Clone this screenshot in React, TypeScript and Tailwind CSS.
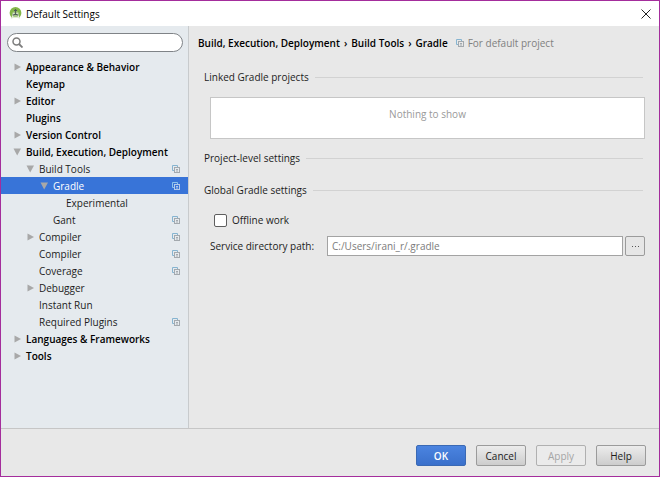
import React from "react";

type Node = {
  label: string;
  level: number;
  state?: "open" | "closed";
  project?: boolean;
  selected?: boolean;
};

const nodes: Node[] = [
  { label: "Appearance & Behavior", level: 0, state: "closed" },
  { label: "Keymap", level: 0 },
  { label: "Editor", level: 0, state: "closed" },
  { label: "Plugins", level: 0 },
  { label: "Version Control", level: 0, state: "closed" },
  { label: "Build, Execution, Deployment", level: 0, state: "open" },
  { label: "Build Tools", level: 1, state: "open", project: true },
  { label: "Gradle", level: 2, state: "open", project: true, selected: true },
  { label: "Experimental", level: 3 },
  { label: "Gant", level: 2, project: true },
  { label: "Compiler", level: 1, state: "closed", project: true },
  { label: "Compiler", level: 1, project: true },
  { label: "Coverage", level: 1, project: true },
  { label: "Debugger", level: 1, state: "closed" },
  { label: "Instant Run", level: 1 },
  { label: "Required Plugins", level: 1, project: true },
  { label: "Languages & Frameworks", level: 0, state: "closed" },
  { label: "Tools", level: 0, state: "closed" },
];

const indents = ["pl-3", "pl-[25px]", "pl-[39px]", "pl-[52px]"];

function ProjectIcon({ selected = false }: { selected?: boolean }) {
  const back = selected ? "#8fc3ea" : "#86b4d0";
  const front = selected ? "#b4c9ea" : "#a3a9ae";
  return (
    <svg viewBox="0 0 8 8" className="size-2 shrink-0" aria-hidden="true">
      <path d="M2 5.5H.5v-5h5V2" fill="none" stroke={back} />
      <rect x="2.5" y="2.5" width="5" height="5" fill="none" stroke={front} />
      <path d="M4 4.5h2M4 6h2" stroke={front} />
    </svg>
  );
}

function Arrow({ state }: { state?: "open" | "closed" }) {
  return (
    <svg viewBox="0 0 8 8" className="size-2 shrink-0" fill="#a8a8a8" aria-hidden="true">
      {state === "closed" && <path d="M1.5 .5 8 4 1.5 7.5z" />}
      {state === "open" && <path d="M.5 .5h7.500L4.200 7.500z" />}
    </svg>
  );
}

function AndroidStudioLogo() {
  return (
    <svg viewBox="0 0 13 13" className="size-[13px]" aria-hidden="true">
      <circle cx="6.5" cy="6" r="5.9" fill="#83b648" />
      <path d="M3 7.200a3.500 3 0 0 1 7 0L9 10H4z" fill="#a9c88a" />
      <path d="M5.200 6 2.500 12M7.800 6l2.700 6" stroke="#e9efe4" strokeWidth="1.200" />
      <path d="M3.800 10.200h5.400L10 13H3z" fill="#fff" />
      <path d="M6.500 2v6M5 3.500h3M3.800 8.200l2.700-1.200 2.700 1.200" stroke="#4f5f55" strokeWidth="1.200" fill="none" />
    </svg>
  );
}

function Section({ title, children }: { title: string; children?: React.ReactNode }) {
  return (
    <section>
      <div className="mr-0.5 flex items-center gap-1.5">
        <h2 className="leading-4">{title}</h2>
        <span className="h-px flex-1 bg-[#d2d2d2]" />
      </div>
      {children}
    </section>
  );
}

const button =
  "h-[21px] w-[50px] rounded-xs border border-[#9b9b9b] bg-linear-to-b from-[#ececec] to-[#cdcdcd] text-center font-medium";

export default function App() {
  return (
    <div className="flex h-screen flex-col border border-[#a42d9c] bg-[#e8e8e8] font-['Open_Sans','Noto_Sans',sans-serif] text-[10px] leading-4 text-[#1c1c1c]">
      <header className="flex h-[25px] shrink-0 items-center gap-1 bg-white pr-2 pl-2">
        <AndroidStudioLogo />
        <h1 className="flex-1 text-black">Default Settings</h1>
        <button type="button" aria-label="Close">
          <svg viewBox="0 0 10 10" className="size-2.5" aria-hidden="true">
            <path d="M.5.5l9 9M9.500.5l-9 9" stroke="#222" />
          </svg>
        </button>
      </header>

      <div className="flex min-h-0 flex-1">
        <aside className="w-[188px] shrink-0 border-r border-[#c8cbcd] bg-[#e5eaee] pt-[7px]">
          <label className="mr-[5px] mb-[6px] ml-1.5 flex h-[19px] items-center gap-1 rounded-full border border-[#7f8387] bg-white pl-1">
            <svg viewBox="0 0 11 11" className="size-[11px] shrink-0" fill="none" stroke="#7d7d7d" aria-hidden="true">
              <circle cx="4.500" cy="4.500" r="3.500" strokeWidth="1.500" />
              <path d="M7 7l3.500 3.500" strokeWidth="1.800" />
            </svg>
            <input type="search" aria-label="Search settings" className="min-w-0 flex-1 outline-none" />
          </label>
          <ul>
            {nodes.map((n, i) => (
              <li key={i}>
                <button
                  type="button"
                  className={`flex h-[17px] w-full items-center gap-[5px] pr-2 text-left ${indents[n.level]} ${
                    n.selected ? "bg-[#3874d8] text-white" : ""
                  } ${n.level === 0 ? "font-semibold text-black" : ""}`}
                >
                  <Arrow state={n.state} />
                  <span className="flex-1 whitespace-nowrap">{n.label}</span>
                  {n.project && <ProjectIcon selected={n.selected} />}
                </button>
              </li>
            ))}
          </ul>
        </aside>

        <main className="min-w-0 flex-1 pt-[9px] pr-3.5 pl-[9px]">
          <nav aria-label="Breadcrumb" className="flex items-center gap-1 font-semibold whitespace-nowrap text-black">
            <span>Build, Execution, Deployment</span>
            <span>›</span>
            <span>Build Tools</span>
            <span>›</span>
            <span>Gradle</span>
            <span className="ml-1 flex items-center gap-1 font-normal text-[#808080]">
              <ProjectIcon />
              For default project
            </span>
          </nav>

          <div className="mt-[18px] flex flex-col gap-4 pl-1.5">
            <Section title="Linked Gradle projects">
              <div className="mt-3 -mb-[5px] ml-1.5 h-[42px] border border-[#c6c6c6] bg-white pt-2 text-center text-[#9a9a9a]">
                Nothing to show
              </div>
            </Section>
            <Section title="Project-level settings" />
            <Section title="Global Gradle settings">
              <div className="ml-1.5">
                <label className="mt-3.5 ml-1 flex w-fit items-center gap-[5px]">
                  <input
                    type="checkbox"
                    className="size-[13px] appearance-none rounded-xs border border-[#5e5e5e] bg-white checked:bg-[#3874d8]"
                  />
                  Offline work
                </label>
                <div className="mt-2 flex items-center">
                  <label htmlFor="service-path" className="w-[117px] shrink-0">
                    Service directory path:
                  </label>
                  <input
                    id="service-path"
                    type="text"
                    defaultValue="C:/Users/irani_r/.gradle"
                    className="h-5 min-w-0 flex-1 border border-[#a3a3a3] bg-white px-1 text-[#7b7b7b] outline-none"
                  />
                  <button
                    type="button"
                    aria-label="Browse"
                    className="ml-0.5 flex h-5 w-5 items-center justify-center rounded-xs border border-[#9b9b9b] bg-[#e6e6e6]"
                  >
                    <svg viewBox="0 0 7 1" className="h-px w-[7px]" fill="#555" aria-hidden="true">
                      <path d="M0 0h1v1H0zM3 0h1v1H3zM6 0h1v1H6z" />
                    </svg>
                  </button>
                </div>
              </div>
            </Section>
          </div>
        </main>
      </div>

      <footer className="flex h-12 shrink-0 items-center justify-end gap-2.5 border-t border-[#c6c6c6] pt-1.5 pr-[13px]">
        <button
          type="button"
          className="h-[21px] w-[50px] rounded-xs border border-[#3a69b4] bg-linear-to-b from-[#4b84e0] to-[#3a70cb] text-center font-semibold text-white"
        >
          OK
        </button>
        <button type="button" className={button}>
          Cancel
        </button>
        <button
          type="button"
          disabled
          className="h-[21px] w-[50px] rounded-xs border border-[#b0b0b0] bg-[#ebebeb] text-center text-[#a5a5a5]"
        >
          Apply
        </button>
        <button type="button" className={button}>
          Help
        </button>
      </footer>
    </div>
  );
}
